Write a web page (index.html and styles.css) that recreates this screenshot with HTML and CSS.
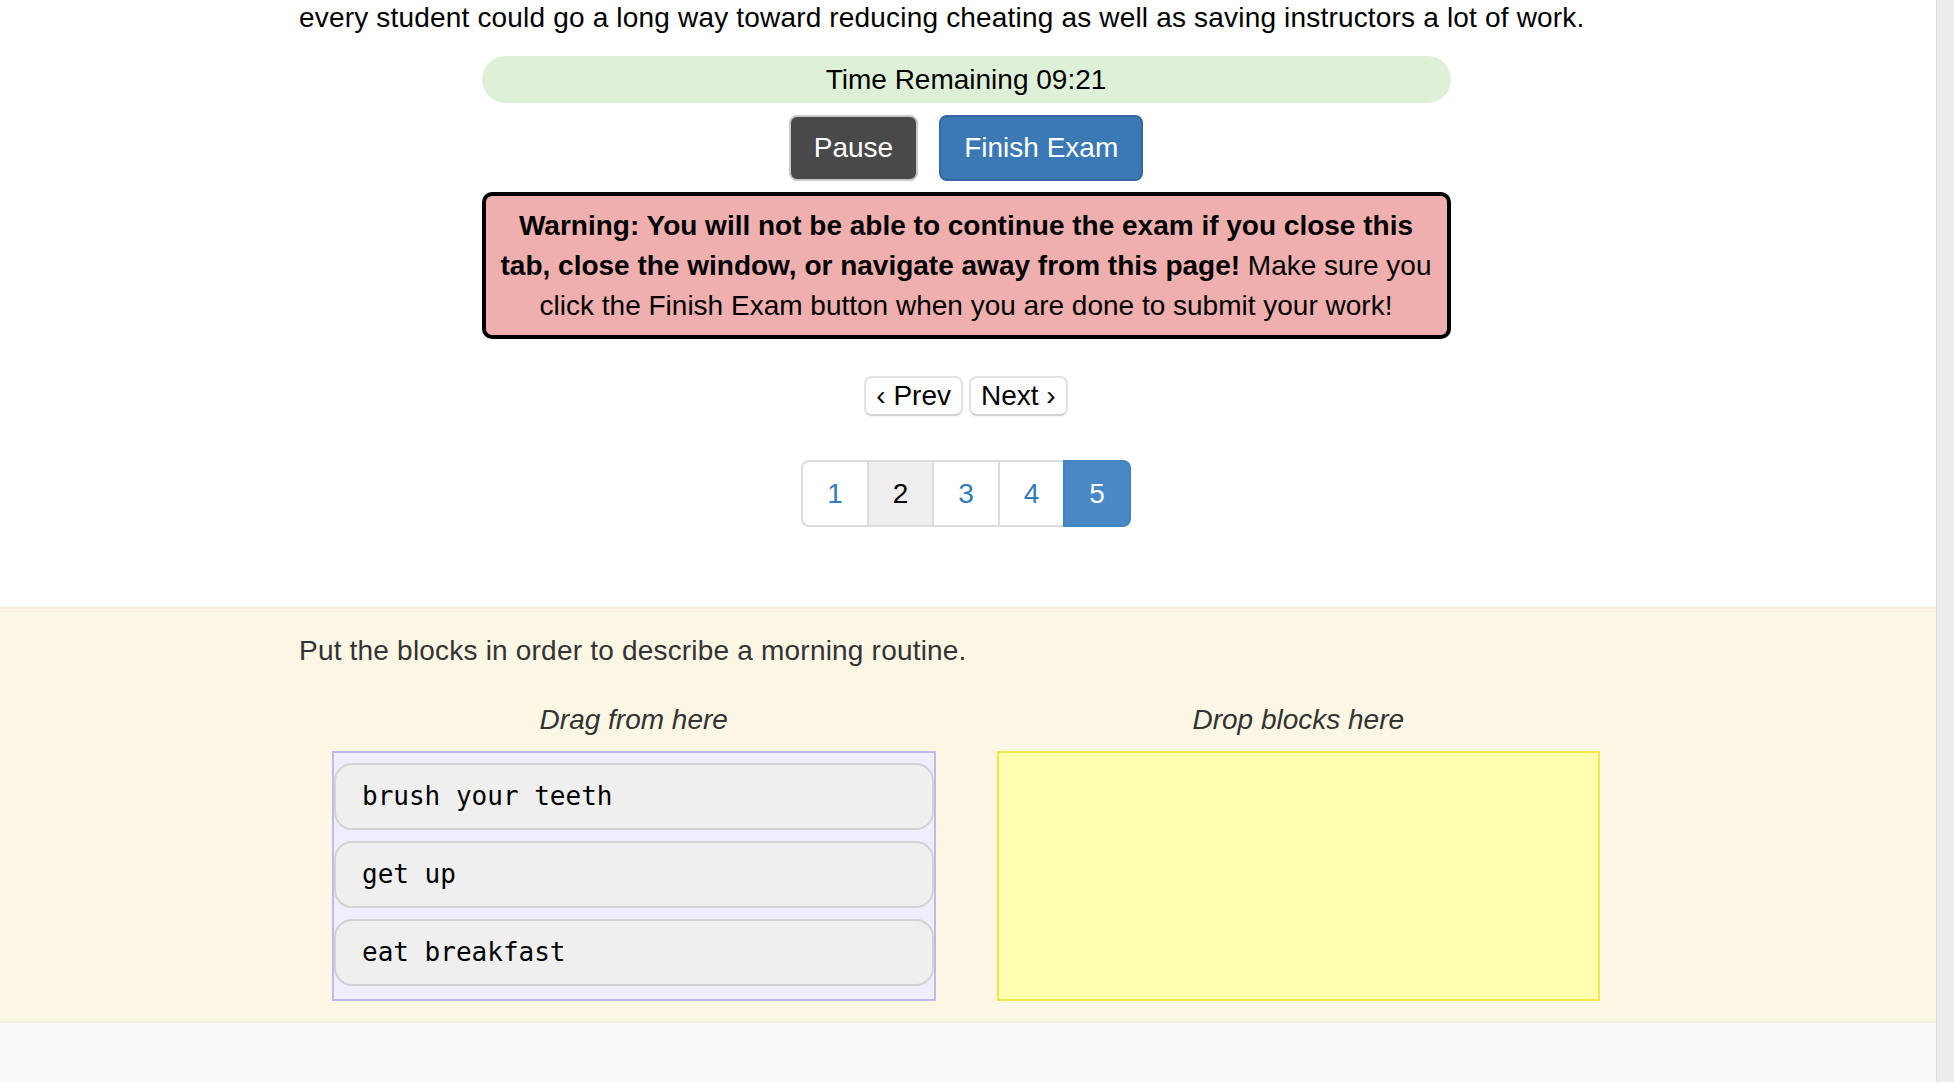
FILE: index.html
```html
<!DOCTYPE html>
<html lang="en">
<head>
<meta charset="utf-8">
<title>Exam</title>
<link rel="stylesheet" href="styles.css">
</head>
<body>
<div class="viewport">
  <div class="main">
    <div class="top">
      <div class="container">
        <p class="para-end">every student could go a long way toward reducing cheating as well as saving instructors a lot of work.</p>
        <div class="timer">Time Remaining 09:21</div>
        <div class="actions">
          <button class="btn btn-pause">Pause</button>
          <button class="btn btn-finish">Finish Exam</button>
        </div>
        <div class="warning"><strong>Warning: You will not be able to continue the exam if you close this<br>tab, close the window, or navigate away from this page!</strong> Make sure you<br>click the Finish Exam button when you are done to submit your work!</div>
        <div class="nav">
          <button class="nav-btn">&lsaquo; Prev</button>
          <button class="nav-btn">Next &rsaquo;</button>
        </div>
        <ul class="pagination">
          <li class="page-item">1</li>
          <li class="page-item current">2</li>
          <li class="page-item">3</li>
          <li class="page-item">4</li>
          <li class="page-item active">5</li>
        </ul>
      </div>
    </div>
    <section class="question">
      <div class="container">
        <p class="prompt">Put the blocks in order to describe a morning routine.</p>
        <div class="columns">
          <div class="col">
            <div class="col-label">Drag from here</div>
            <div class="source">
              <div class="block">brush your teeth</div>
              <div class="block">get up</div>
              <div class="block">eat breakfast</div>
            </div>
          </div>
          <div class="col">
            <div class="col-label">Drop blocks here</div>
            <div class="target"></div>
          </div>
        </div>
      </div>
    </section>
    <div class="after"></div>
  </div>
  <div class="scrollbar"></div>
</div>
</body>
</html>
```

FILE: styles.css
```css
html, body {
  margin: 0;
  padding: 0;
  height: 100%;
  overflow: hidden;
}

body {
  font-family: "Liberation Sans", Arial, Helvetica, sans-serif;
  font-size: 28px;
  line-height: 40px;
  color: #000;
  background: #fff;
}

.viewport {
  display: flex;
  height: 1082px;
}

.main {
  flex: 1;
  display: flex;
  flex-direction: column;
  min-width: 0;
}

.scrollbar {
  width: 17px;
  background: #ededed;
  border-left: 1px solid #dcdcdc;
}

.container {
  width: 1334px;
  margin-left: 299px;
}

.top {
  background: #fff;
}

.para-end {
  margin: -2px 0 0;
  color: #000;
  letter-spacing: 0.18px;
}

.timer {
  width: 969px;
  margin: 18px auto 0;
  padding: 4px 0 3px;
  background: #dff0d8;
  border-radius: 24px;
  text-align: center;
  color: #000;
}

.actions {
  display: flex;
  justify-content: center;
  gap: 21px;
  margin-top: 12px;
}

.btn {
  font: inherit;
  line-height: 40px;
  padding: 11px 23px;
  border: 2px solid transparent;
  border-radius: 8px;
  color: #fff;
  cursor: pointer;
}

.btn-pause {
  background: #494949;
  border-color: #c9c9c9;
}

.btn-finish {
  background: #3b79b5;
  border-color: #3468a1;
}

.warning {
  width: 969px;
  box-sizing: border-box;
  margin: 11px auto 0;
  padding: 10px 10px 9px;
  border: 4px solid #000;
  border-radius: 10px;
  background: #efafaf;
  text-align: center;
  color: #000;
}

.nav {
  display: flex;
  justify-content: center;
  gap: 6px;
  margin-top: 37px;
}

.nav-btn {
  font: inherit;
  line-height: 36px;
  padding: 0 10px;
  background: #fff;
  color: #000;
  border: 2px solid #e2e2e2;
  border-bottom-color: #d2d2d2;
  border-radius: 8px;
  box-shadow: 0 1px 2px rgba(0, 0, 0, 0.06);
}

.pagination {
  display: flex;
  justify-content: center;
  list-style: none;
  margin: 44px 0 0;
  padding: 0;
}

.page-item {
  width: 67.5px;
  box-sizing: border-box;
  padding: 11.5px 0;
  margin-left: -2px;
  text-align: center;
  color: #337ab7;
  background: #fff;
  border: 2px solid #ddd;
  line-height: 40px;
}

.page-item:first-child {
  margin-left: 0;
  border-radius: 8px 0 0 8px;
}

.page-item:last-child {
  border-radius: 0 8px 8px 0;
}

.page-item.current {
  background: #eee;
  color: #000;
}

.page-item.active {
  position: relative;
  background: #4889c5;
  border-color: #4382bd;
  color: #fff;
}

.question {
  margin-top: 80px;
  background: #fcf7e5;
  border-top: 2px solid #f8ecd6;
  border-bottom: 2px solid #f6eedd;
  padding: 22px 0 20px;
}

.prompt {
  margin: 0;
  color: #333;
  letter-spacing: 0.2px;
}

.columns {
  display: flex;
  gap: 61px;
  padding: 0 33px;
  margin-top: 29px;
}

.col {
  flex: 1;
  display: flex;
  flex-direction: column;
}

.col-label {
  text-align: center;
  font-style: italic;
  color: #333;
  margin-bottom: 11px;
}

.source {
  display: flex;
  flex-direction: column;
  gap: 11px;
  padding: 10px 0 13px;
  background: #eeeeff;
  border: 2px solid #bbbbee;
}

.block {
  height: 67px;
  box-sizing: border-box;
  padding: 11px 26px 12px;
  background: #efefef;
  border: 2px solid #d3d3d3;
  border-radius: 18px;
  font-family: "DejaVu Sans Mono", "Liberation Mono", monospace;
  font-size: 26px;
  line-height: 40px;
  color: #000;
}

.target {
  flex: 1;
  background: #ffffb0;
  border: 2px solid #f2e64a;
}

.after {
  flex: 1;
  background: #fafafa;
}
```
